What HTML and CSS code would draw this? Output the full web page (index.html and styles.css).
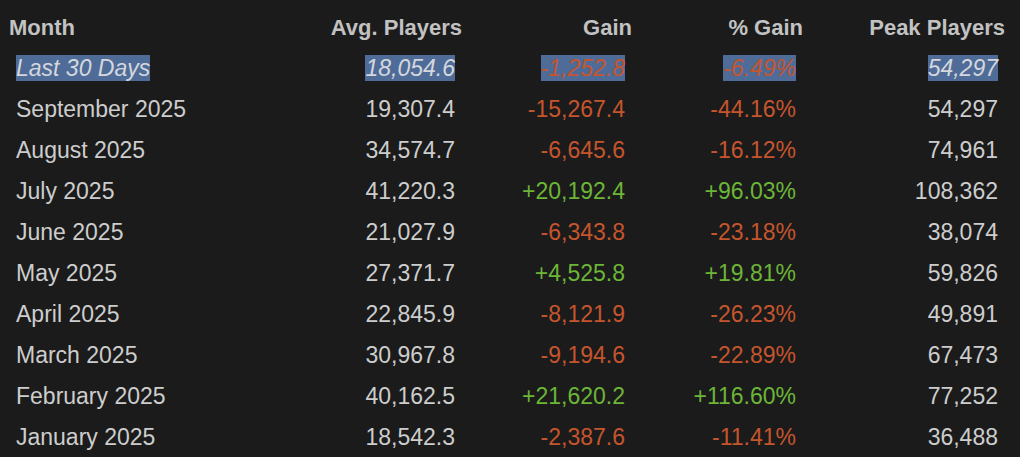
FILE: index.html
```
<!DOCTYPE html>
<html>
<head>
<meta charset="utf-8">
<link rel="stylesheet" href="styles.css">
</head>
<body>
<table class="stats">
  <colgroup>
    <col class="c-month"><col class="c-avg"><col class="c-gain"><col class="c-pct"><col class="c-peak">
  </colgroup>
  <thead>
    <tr><th class="left">Month</th><th>Avg. Players</th><th>Gain</th><th>% Gain</th><th>Peak Players</th></tr>
  </thead>
  <tbody>
    <tr class="recent">
      <td class="left"><span class="sel">Last 30 Days</span></td>
      <td><span class="sel">18,054.6</span></td>
      <td class="neg"><span class="sel">-1,252.8</span></td>
      <td class="neg"><span class="sel">-6.49%</span></td>
      <td><span class="sel">54,297</span></td>
    </tr>
    <tr><td class="left">September 2025</td><td>19,307.4</td><td class="neg">-15,267.4</td><td class="neg">-44.16%</td><td>54,297</td></tr>
    <tr><td class="left">August 2025</td><td>34,574.7</td><td class="neg">-6,645.6</td><td class="neg">-16.12%</td><td>74,961</td></tr>
    <tr><td class="left">July 2025</td><td>41,220.3</td><td class="pos">+20,192.4</td><td class="pos">+96.03%</td><td>108,362</td></tr>
    <tr><td class="left">June 2025</td><td>21,027.9</td><td class="neg">-6,343.8</td><td class="neg">-23.18%</td><td>38,074</td></tr>
    <tr><td class="left">May 2025</td><td>27,371.7</td><td class="pos">+4,525.8</td><td class="pos">+19.81%</td><td>59,826</td></tr>
    <tr><td class="left">April 2025</td><td>22,845.9</td><td class="neg">-8,121.9</td><td class="neg">-26.23%</td><td>49,891</td></tr>
    <tr><td class="left">March 2025</td><td>30,967.8</td><td class="neg">-9,194.6</td><td class="neg">-22.89%</td><td>67,473</td></tr>
    <tr><td class="left">February 2025</td><td>40,162.5</td><td class="pos">+21,620.2</td><td class="pos">+116.60%</td><td>77,252</td></tr>
    <tr><td class="left">January 2025</td><td>18,542.3</td><td class="neg">-2,387.6</td><td class="neg">-11.41%</td><td>36,488</td></tr>
  </tbody>
</table>
</body>
</html>
```

FILE: styles.css
```
html, body {
  margin: 0;
  padding: 0;
  background: #1b1b1b;
  overflow: hidden;
}
body {
  font-family: "Liberation Sans", Arial, sans-serif;
  color: #cdcdcd;
}
.stats {
  border-collapse: collapse;
  table-layout: fixed;
  width: 1011px;
  margin-top: 7px;
}
.c-month { width: 300px; }
.c-avg { width: 168px; }
.c-gain { width: 170px; }
.c-pct { width: 171px; }
.c-peak { width: 202px; }
.stats th, .stats td {
  height: 41px;
  padding: 0;
  text-align: right;
  white-space: nowrap;
  vertical-align: middle;
  line-height: 41px;
}
.stats th {
  font-size: 22px;
  font-weight: bold;
  color: #c2c2c2;
  padding-right: 6px;
}
.stats td {
  font-size: 23px;
  padding-right: 13px;
}
.stats th.left {
  text-align: left;
  padding-left: 9px;
}
.stats td.left {
  text-align: left;
  padding-left: 16px;
}
.neg { color: #c5552d; }
.pos { color: #6cb537; }
.recent td { font-style: italic; }
.sel { background: #4f6b97; }
.recent td:not(.neg) .sel { color: #d4d8de; }
```
